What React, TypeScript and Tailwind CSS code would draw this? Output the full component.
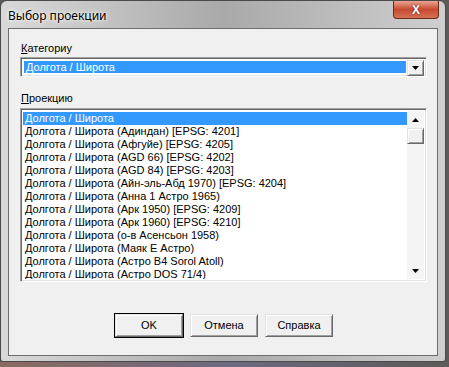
const rows = [
  "Долгота / Широта",
  "Долгота / Широта (Адиндан) [EPSG: 4201]",
  "Долгота / Широта (Афгуйе) [EPSG: 4205]",
  "Долгота / Широта (AGD 66) [EPSG: 4202]",
  "Долгота / Широта (AGD 84) [EPSG: 4203]",
  "Долгота / Широта (Айн-эль-Абд 1970) [EPSG: 4204]",
  "Долгота / Широта (Анна 1 Астро 1965)",
  "Долгота / Широта (Арк 1950) [EPSG: 4209]",
  "Долгота / Широта (Арк 1960) [EPSG: 4210]",
  "Долгота / Широта (о-в Асенсьон 1958)",
  "Долгота / Широта (Маяк E Астро)",
  "Долгота / Широта (Астро B4 Sorol Atoll)",
  "Долгота / Широта (Астро DOS 71/4)",
];

const sunken =
  "border border-t-[#a0a0a0] border-l-[#a0a0a0] border-b-white border-r-white shadow-[inset_1px_1px_0_#696969,inset_-1px_-1px_0_#e3e3e3]";
const raised =
  "border border-t-[#e3e3e3] border-l-[#e3e3e3] border-b-[#696969] border-r-[#696969] shadow-[inset_1px_1px_0_#ffffff,inset_-1px_-1px_0_#a0a0a0] bg-[#f0f0f0]";

function Arrow({ down = true }: { down?: boolean }) {
  return (
    <svg width="7" height="4" viewBox="0 0 7 4">
      <path d={down ? "M0 0h7L3.5 4z" : "M0 4h7L3.5 0z"} fill="#000" />
    </svg>
  );
}

export default function App() {
  return (
    <div
      className="w-[449px] h-[367px] bg-[#5d5a58] overflow-hidden"
      style={{ fontFamily: '"Liberation Sans", Arial, sans-serif' }}
    >
      {/* ================= WINDOW ================= */}
      <div className="w-[446px] h-[362px] rounded-t-[7px] rounded-b-[3px] border border-[#4a4a4a] bg-gradient-to-r from-[#d9d9d9] via-[#a9a9a9] to-[#cfcfcf] flex flex-col">
        <div className="h-[27px] flex items-center justify-between pl-[7px] pr-[6px]">
          <span
            className="text-[12px] text-black pt-[2px]"
            style={{ fontFamily: '"Noto Sans", "Open Sans", sans-serif', textShadow: "0 0 6px #fff, 0 0 3px #fff" }}
          >
            Выбор проекции
          </span>
          <div className="self-start w-[46px] h-[18px] rounded-b-[4px] border border-[#6b2a1e] border-t-0 bg-gradient-to-b from-[#e8a493] via-[#c74a30] to-[#d66f55] flex items-center justify-center">
            <span className="text-white text-[12px] font-bold leading-none" style={{ textShadow: "0 0 2px #5a1a10" }}>
              X
            </span>
          </div>
        </div>

        {/* client area */}
        <div className="mx-[7px] h-[328px] border border-[#6e6e6e] bg-[#f0f0f0] text-[11px] text-black pl-[11px] flex flex-col">
          <div className="h-[28px] pt-[13px] pl-[1px] leading-[13px]">
            <span className="underline">К</span>атегориу
          </div>
          <div className={`w-[407px] h-[20px] bg-white ${sunken} flex p-[2px]`}>
            <div className="flex-1 bg-[#3399ff] border border-white text-white leading-[13px] pl-[2px]">
              Долгота / Широта
            </div>
            <div className={`w-[17px] h-[16px] -my-[0px] ${raised} flex items-center justify-center`}>
              <Arrow />
            </div>
          </div>
          <div className="h-[31px] pt-[15px] pl-[1px] leading-[13px]">
            <span className="underline">П</span>роекцию
          </div>
          <div className={`w-[407px] h-[174px] bg-white ${sunken} flex p-[2px]`}>
            <div className="flex-1 flex flex-col pt-[1px] overflow-hidden">
              {rows.map((r, i) => (
                <div
                  key={i}
                  className={`h-[13px] leading-[13px] pl-[2px] whitespace-nowrap ${
                    i === 0 ? "bg-[#3399ff] text-white" : ""
                  }`}
                >
                  {r}
                </div>
              ))}
            </div>
            <div className="w-[17px] flex flex-col bg-[#f4f4f4]">
              <div className="h-[17px] flex items-center justify-center">
                <Arrow down={false} />
              </div>
              <div className={`h-[16px] ${raised}`} />
              <div className="flex-1" />
              <div className="h-[17px] flex items-center justify-center">
                <Arrow />
              </div>
            </div>
          </div>
          <div className="flex gap-[7px] mt-[32px] ml-[95px]">
            <button className={`w-[68px] h-[23px] ${raised} outline outline-1 outline-black -outline-offset-0`}>OK</button>
            <button className={`w-[68px] h-[23px] ${raised}`}>Отмена</button>
            <button className={`w-[68px] h-[23px] ${raised}`}>Справка</button>
          </div>
        </div>
      </div>
      <div className="h-[5px] bg-gradient-to-r from-[#8a6a60] via-[#6c6a80] to-[#5d5a58]" />
    </div>
  );
}
